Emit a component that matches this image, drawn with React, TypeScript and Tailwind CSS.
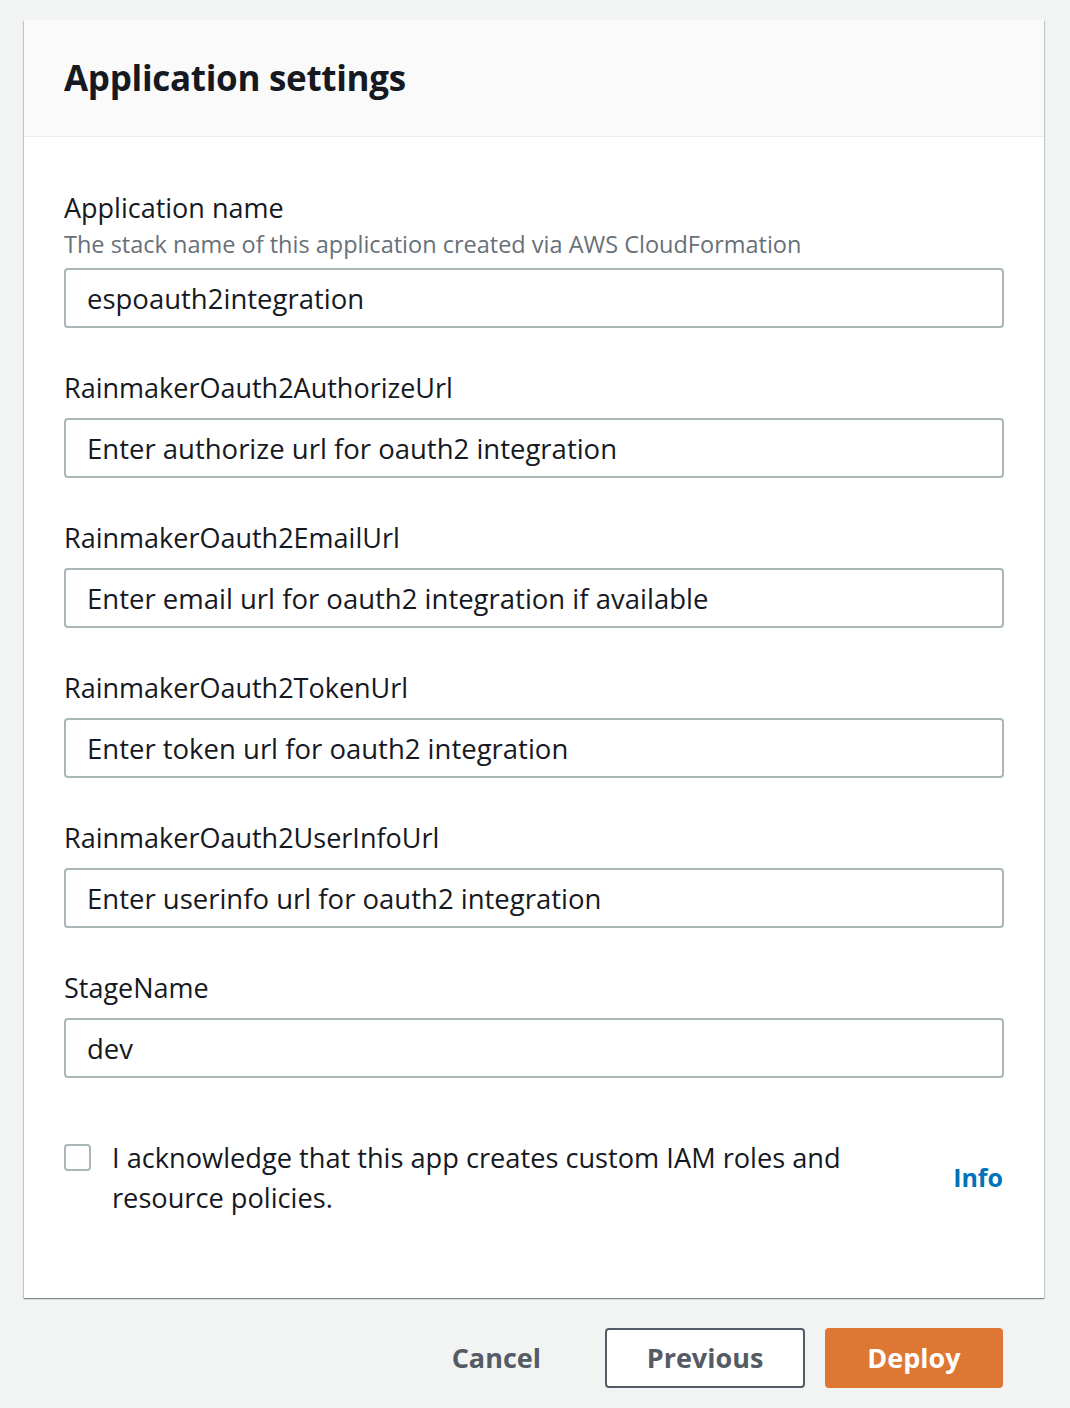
import React from 'react';

interface Field {
  label: string;
  description?: string;
  value?: string;
  placeholder?: string;
}

const fields: Field[] = [
  {
    label: 'Application name',
    description: 'The stack name of this application created via AWS CloudFormation',
    value: 'espoauth2integration',
  },
  { label: 'RainmakerOauth2AuthorizeUrl', placeholder: 'Enter authorize url for oauth2 integration' },
  { label: 'RainmakerOauth2EmailUrl', placeholder: 'Enter email url for oauth2 integration if available' },
  { label: 'RainmakerOauth2TokenUrl', placeholder: 'Enter token url for oauth2 integration' },
  { label: 'RainmakerOauth2UserInfoUrl', placeholder: 'Enter userinfo url for oauth2 integration' },
  { label: 'StageName', value: 'dev' },
];

const font = { fontFamily: '"Open Sans", "Noto Sans", Arial, sans-serif' };

const App: React.FC = () => {
  return (
    <div className="min-h-[1408px] bg-[#f2f3f3] pt-[20px] text-[#16191f]" style={font}>
      <div className="ml-[24px] w-[1020px] bg-white shadow-[0_1px_1px_0_rgba(0,28,36,0.3),1px_1px_1px_0_rgba(0,28,36,0.15),-1px_1px_1px_0_rgba(0,28,36,0.15)]">
        <div className="h-[117px] flex items-center px-[40px] bg-[#fafafa] border-b border-[#eaeded]">
          <h2 className="text-[35px] font-bold tracking-[-0.3px]">Application settings</h2>
        </div>

        <div className="pt-[53px] pb-[80px] px-[40px]">
          {fields.map((f, i) => (
            <div key={f.label} className={i > 0 ? 'mt-[42px]' : ''}>
              <label className={`block text-[27px] leading-[36px] ${f.description ? '' : 'mb-[12px]'}`}>
                {f.label}
              </label>
              {f.description && (
                <p className="text-[23.5px] leading-[36px] text-[#687078] mb-[6px]">{f.description}</p>
              )}
              <input
                type="text"
                defaultValue={f.value}
                placeholder={f.placeholder}
                className="block w-full h-[60px] px-[21px] text-[27.5px] border-2 border-[#aab7b8] rounded-[4px] bg-white text-[#16191f] placeholder:text-[#16191f] outline-none"
                style={font}
              />
            </div>
          ))}

          <div className="mt-[60px] flex items-center justify-between">
            <div className="flex items-start gap-[21px]">
              <span className="mt-[6px] w-[27px] h-[27px] shrink-0 rounded-[4px] border-2 border-[#aab7b8] bg-white" />
              <p className="text-[27.2px] leading-[40px] max-w-[760px]">
                I acknowledge that this app creates custom IAM roles and resource policies.
              </p>
            </div>
            <a href="#" className="text-[#0073bb] text-[25px] font-bold mr-[1px]">Info</a>
          </div>
        </div>
      </div>

      <div className="w-[1044px] flex justify-end items-center gap-[20px] pr-[41px] mt-[30px]">
        <button className="h-[60px] px-[44px] text-[27px] font-bold text-[#545b64]">Cancel</button>
        <button className="h-[60px] w-[200px] text-[27px] font-bold text-[#545b64] bg-white border-2 border-[#545b64] rounded-[4px]">
          Previous
        </button>
        <button className="h-[60px] w-[178px] text-[27px] font-bold text-white bg-[#dd7733] rounded-[4px]">
          Deploy
        </button>
      </div>
    </div>
  );
};

export default App;
